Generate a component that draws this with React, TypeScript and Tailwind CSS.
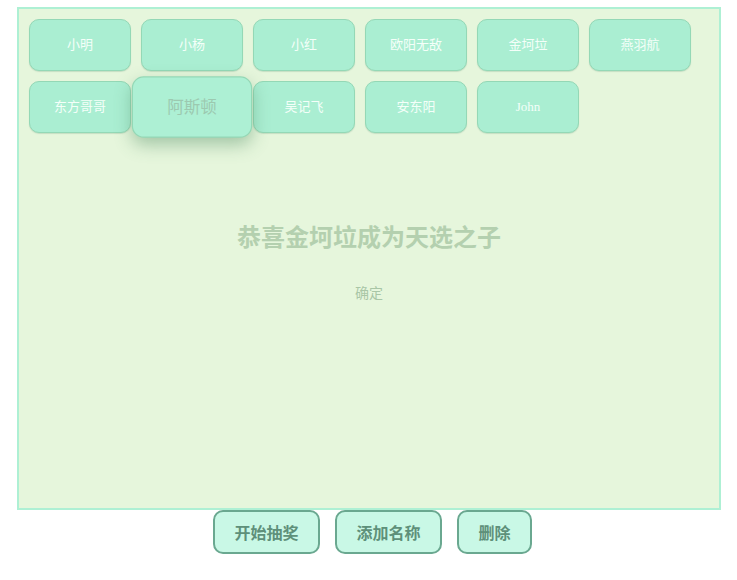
import React from "react";

const names = ["小明", "小杨", "小红", "欧阳无敌", "金坷垃", "燕羽航", "东方哥哥", "阿斯顿", "吴记飞", "安东阳", "John"];

export default function App() {
  return (
    <div className="w-[737px] h-[580px] bg-white" style={{ fontFamily: '"Liberation Serif", "Noto Sans CJK SC", serif' }}>
      <div className="pt-[7px] pl-[17px]">
        <div className="w-[704px] h-[503px] border-2 border-[#aef0d4] bg-[#e6f6dc] flex flex-col">
          <div className="flex flex-wrap gap-[10px] pt-[10px] pl-[10px] w-[700px]">
            {names.map((n, i) =>
              i === 7 ? (
                <div
                  key={n}
                  className="relative z-10 w-[102px] h-[52px] rounded-[10px] border border-[#94d8b6] bg-[#adf0d4] flex items-center justify-center text-[14px] font-normal text-[#9cc9b0] scale-[1.18] shadow-[0_6px_14px_rgba(80,140,100,0.45)]"
                >
                  {n}
                </div>
              ) : (
                <div
                  key={n}
                  className="w-[102px] h-[52px] rounded-[10px] border border-[#94d8b6] bg-[#aaeed2] flex items-center justify-center text-[13px] font-normal text-[#f4fff9] shadow-[0_1px_1px_rgba(120,170,140,0.3)]"
                >
                  {n}
                </div>
              )
            )}
          </div>
          <div className="mt-[87px] text-center text-[24px] font-bold text-[#b4d0af] leading-[32px]" style={{ fontFamily: '"Noto Sans CJK SC", sans-serif' }}>
            恭喜金坷垃成为天选之子
          </div>
          <div className="mt-[30px] text-center text-[14px] text-[#a9c6a6] leading-[20px]" style={{ fontFamily: '"Noto Sans CJK SC", sans-serif' }}>
            确定
          </div>
        </div>
      </div>
      <div className="flex justify-center gap-[15px] pl-[8px]" style={{ fontFamily: '"Noto Sans CJK SC", sans-serif' }}>
        <button className="w-[107px] h-[44px] rounded-[10px] border-2 border-[#6aa890] bg-[#c9f8e6] text-[16px] font-bold text-[#5e907a]">开始抽奖</button>
        <button className="w-[107px] h-[44px] rounded-[10px] border-2 border-[#6aa890] bg-[#c9f8e6] text-[16px] font-bold text-[#5e907a]">添加名称</button>
        <button className="w-[75px] h-[44px] rounded-[10px] border-2 border-[#6aa890] bg-[#c9f8e6] text-[16px] font-bold text-[#5e907a]">删除</button>
      </div>
    </div>
  );
}
